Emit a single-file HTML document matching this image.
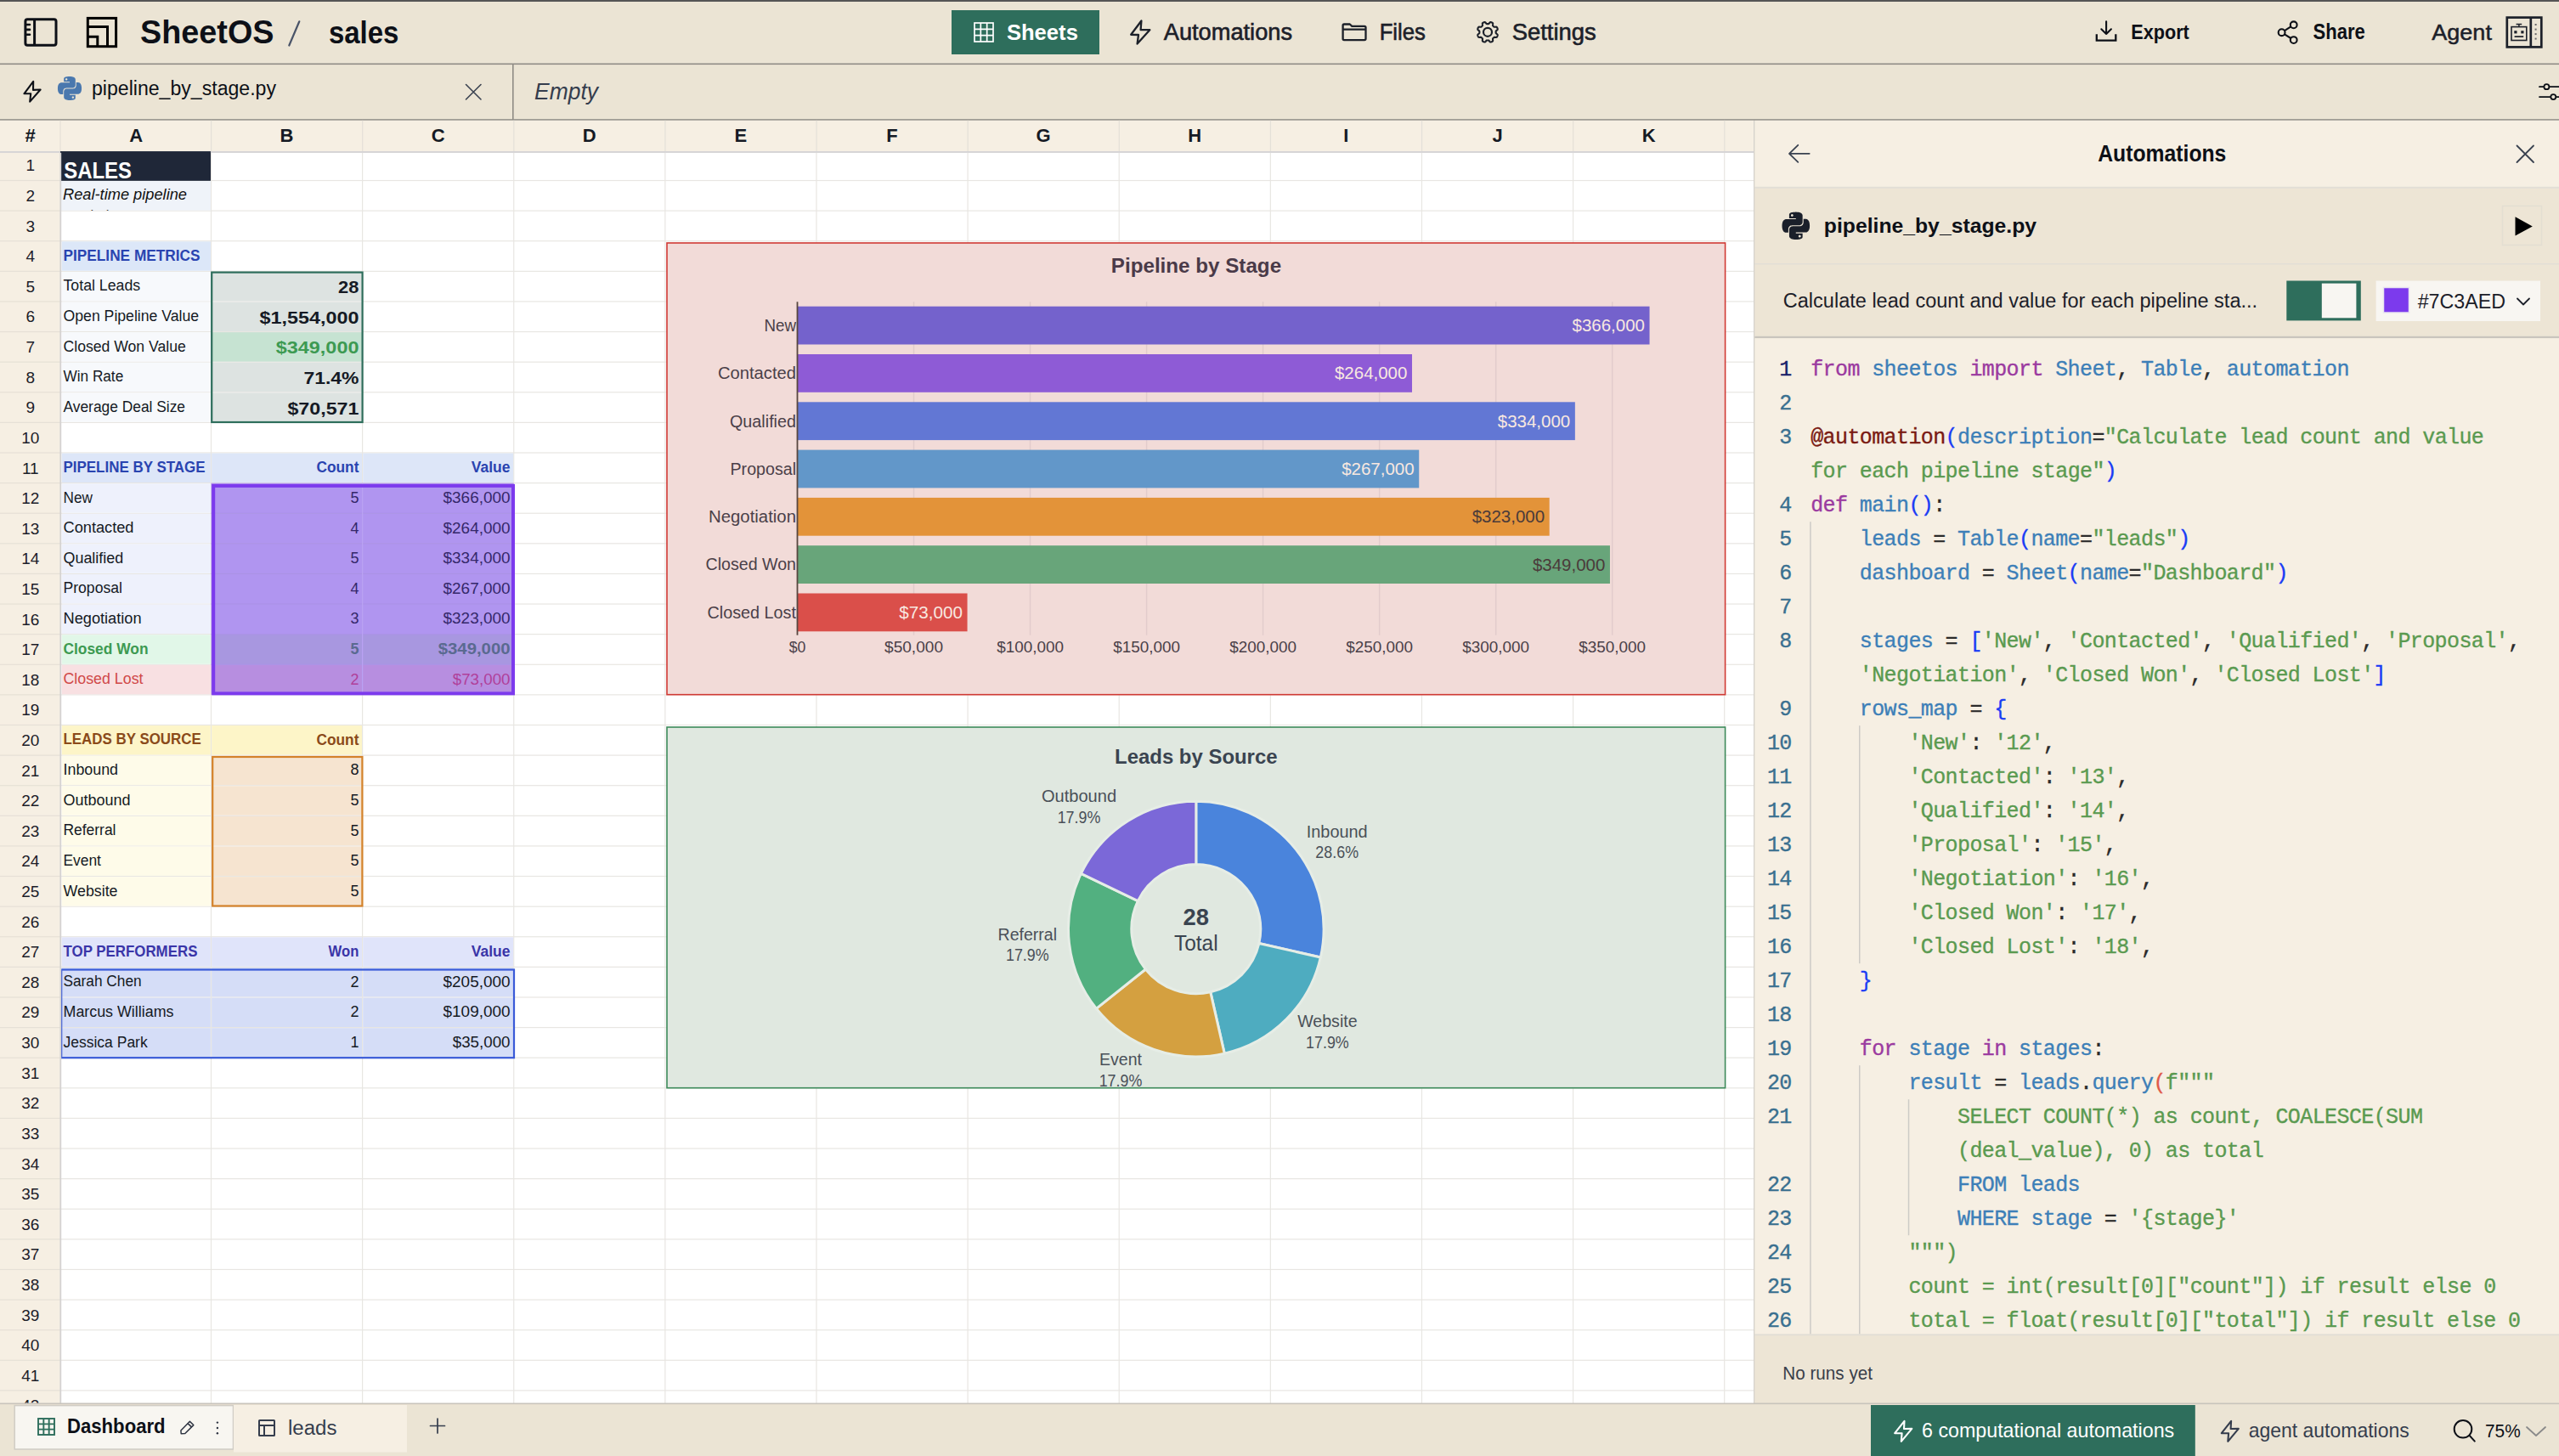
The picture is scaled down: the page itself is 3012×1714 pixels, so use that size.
<!DOCTYPE html>
<html><head><meta charset="utf-8"><title>SheetOS</title>
<style>html,body{margin:0;padding:0;width:3012px;height:1714px;overflow:hidden;background:#ebe4d4}
svg{display:block;font-family:"Liberation Sans",sans-serif}</style></head>
<body><svg width="3012" height="1714" viewBox="0 0 3012 1714">
<rect x="0.00" y="0.00" width="3012.00" height="1714.00" fill="#ebe4d4"/>
<rect x="0.00" y="0.00" width="3012.00" height="2.00" fill="#555555"/>
<rect x="0.00" y="74.50" width="3012.00" height="1.60" fill="#8f8c85"/>
<rect x="0.00" y="140.20" width="3012.00" height="1.60" fill="#8f8c85"/>
<rect x="603.00" y="75.00" width="1.60" height="66.00" fill="#8f8c85"/>
<rect x="29.9" y="22.7" width="36.1" height="30.5" rx="2.4" fill="none" stroke="#0d1017" stroke-width="3"/>
<path d="M40.6 22.7 V53.2" stroke="#0d1017" stroke-width="3" fill="none" stroke-linecap="butt" stroke-linejoin="round"/>
<path d="M31 29 H35 M31 34.9 H35 M31 40.7 H35" stroke="#0d1017" stroke-width="2.6" fill="none" stroke-linecap="round" stroke-linejoin="round"/>
<rect x="103.3" y="21.4" width="33.3" height="33.3" fill="none" stroke="#000" stroke-width="3"/>
<path d="M103.3 31.6 H126.5 V54.7 M103.3 43.3 H114.8 V54.7" fill="none" stroke="#000" stroke-width="3"/>
<text x="165.00" y="51.30" font-size="39" fill="#0d1017" font-weight="bold" textLength="157.50" lengthAdjust="spacingAndGlyphs">SheetOS</text>
<path d="M352.3 25.3 L340.3 53.5" stroke="#4a5468" stroke-width="2.2" fill="none" stroke-linecap="round" stroke-linejoin="round"/>
<text x="386.90" y="51.25" font-size="36" fill="#0d1017" font-weight="bold" textLength="82.50" lengthAdjust="spacingAndGlyphs">sales</text>
<rect x="1120.00" y="12.00" width="174.00" height="52.00" fill="#2e6e5c"/>
<g stroke="#fff" stroke-width="1.7" fill="none"><rect x="1147" y="27" width="22" height="22"/><path d="M1154.33 27 V49 M1161.67 27 V49 M1147 34.33 H1169 M1147 41.67 H1169"/></g>
<text x="1184.90" y="46.90" font-size="26.5" fill="#ffffff" font-weight="bold" textLength="84.00" lengthAdjust="spacingAndGlyphs">Sheets</text>
<path d="M1343.4 24.5 L1342.6 35 L1353.3 35.2 L1338.6 51.6 L1340 41 L1331.2 40.8 Z" stroke="#1c2029" stroke-width="2.3" fill="none" stroke-linecap="round" stroke-linejoin="round"/>
<text x="1369.80" y="47.00" font-size="27" fill="#1c2029" textLength="151.20" lengthAdjust="spacingAndGlyphs" stroke="#1c2029" stroke-width="0.6">Automations</text>
<path d="M1580.6 30 Q1580.6 28.5 1582 28.5 H1588.8 L1591.3 30.8 H1606 Q1607.5 30.8 1607.5 32.3 V45.6 Q1607.5 47.1 1606 47.1 H1582 Q1580.6 47.1 1580.6 45.6 Z M1580.6 34.6 H1607.5" stroke="#1c2029" stroke-width="2.3" fill="none" stroke-linecap="round" stroke-linejoin="round"/>
<text x="1623.70" y="46.60" font-size="26.8" fill="#1c2029" textLength="54.20" lengthAdjust="spacingAndGlyphs" stroke="#1c2029" stroke-width="0.6">Files</text>
<path d="M1751.00 28.15 L1751.32 28.15 L1751.63 28.14 L1751.95 28.11 L1752.29 27.99 L1752.68 27.65 L1753.15 27.01 L1753.66 26.39 L1754.13 26.11 L1754.56 26.06 L1754.96 26.13 L1755.35 26.25 L1755.73 26.39 L1756.09 26.56 L1756.45 26.75 L1756.78 26.98 L1757.05 27.31 L1757.18 27.85 L1757.11 28.65 L1756.99 29.44 L1757.02 29.95 L1757.18 30.28 L1757.38 30.52 L1757.60 30.75 L1757.82 30.98 L1758.05 31.20 L1758.28 31.42 L1758.52 31.62 L1758.85 31.78 L1759.36 31.81 L1760.15 31.69 L1760.95 31.62 L1761.49 31.75 L1761.82 32.02 L1762.05 32.35 L1762.24 32.71 L1762.41 33.07 L1762.55 33.45 L1762.67 33.84 L1762.74 34.24 L1762.69 34.67 L1762.41 35.14 L1761.79 35.65 L1761.15 36.12 L1760.81 36.51 L1760.69 36.85 L1760.66 37.17 L1760.65 37.48 L1760.65 37.80 L1760.65 38.12 L1760.66 38.43 L1760.69 38.75 L1760.81 39.09 L1761.15 39.48 L1761.79 39.95 L1762.41 40.46 L1762.69 40.93 L1762.74 41.36 L1762.67 41.76 L1762.55 42.15 L1762.41 42.53 L1762.24 42.89 L1762.05 43.25 L1761.82 43.58 L1761.49 43.85 L1760.95 43.98 L1760.15 43.91 L1759.36 43.79 L1758.85 43.82 L1758.52 43.98 L1758.28 44.18 L1758.05 44.40 L1757.82 44.62 L1757.60 44.85 L1757.38 45.08 L1757.18 45.32 L1757.02 45.65 L1756.99 46.16 L1757.11 46.95 L1757.18 47.75 L1757.05 48.29 L1756.78 48.62 L1756.45 48.85 L1756.09 49.04 L1755.73 49.21 L1755.35 49.35 L1754.96 49.47 L1754.56 49.54 L1754.13 49.49 L1753.66 49.21 L1753.15 48.59 L1752.68 47.95 L1752.29 47.61 L1751.95 47.49 L1751.63 47.46 L1751.32 47.45 L1751.00 47.45 L1750.68 47.45 L1750.37 47.46 L1750.05 47.49 L1749.71 47.61 L1749.32 47.95 L1748.85 48.59 L1748.34 49.21 L1747.87 49.49 L1747.44 49.54 L1747.04 49.47 L1746.65 49.35 L1746.27 49.21 L1745.91 49.04 L1745.55 48.85 L1745.22 48.62 L1744.95 48.29 L1744.82 47.75 L1744.89 46.95 L1745.01 46.16 L1744.98 45.65 L1744.82 45.32 L1744.62 45.08 L1744.40 44.85 L1744.18 44.62 L1743.95 44.40 L1743.72 44.18 L1743.48 43.98 L1743.15 43.82 L1742.64 43.79 L1741.85 43.91 L1741.05 43.98 L1740.51 43.85 L1740.18 43.58 L1739.95 43.25 L1739.76 42.89 L1739.59 42.53 L1739.45 42.15 L1739.33 41.76 L1739.26 41.36 L1739.31 40.93 L1739.59 40.46 L1740.21 39.95 L1740.85 39.48 L1741.19 39.09 L1741.31 38.75 L1741.34 38.43 L1741.35 38.12 L1741.35 37.80 L1741.35 37.48 L1741.34 37.17 L1741.31 36.85 L1741.19 36.51 L1740.85 36.12 L1740.21 35.65 L1739.59 35.14 L1739.31 34.67 L1739.26 34.24 L1739.33 33.84 L1739.45 33.45 L1739.59 33.07 L1739.76 32.71 L1739.95 32.35 L1740.18 32.02 L1740.51 31.75 L1741.05 31.62 L1741.85 31.69 L1742.64 31.81 L1743.15 31.78 L1743.48 31.62 L1743.72 31.42 L1743.95 31.20 L1744.18 30.98 L1744.40 30.75 L1744.62 30.52 L1744.82 30.28 L1744.98 29.95 L1745.01 29.44 L1744.89 28.65 L1744.82 27.85 L1744.95 27.31 L1745.22 26.98 L1745.55 26.75 L1745.91 26.56 L1746.27 26.39 L1746.65 26.25 L1747.04 26.13 L1747.44 26.06 L1747.87 26.11 L1748.34 26.39 L1748.85 27.01 L1749.32 27.65 L1749.71 27.99 L1750.05 28.11 L1750.37 28.14 L1750.68 28.15 Z" stroke="#1c2029" stroke-width="2.1" fill="none" stroke-linecap="round" stroke-linejoin="round"/>
<circle cx="1751" cy="37.8" r="5" fill="none" stroke="#1c2029" stroke-width="2.2"/>
<text x="1779.70" y="47.00" font-size="27" fill="#1c2029" textLength="99.00" lengthAdjust="spacingAndGlyphs" stroke="#1c2029" stroke-width="0.6">Settings</text>
<path d="M2467.8 40.2 V47.6 H2490.3 V40.2" stroke="#0d1017" stroke-width="2.3" fill="none" stroke-linecap="butt" stroke-linejoin="miter"/>
<path d="M2479.1 25.3 V40 M2473.3 34.3 L2479.1 40 L2484.9 34.3" stroke="#0d1017" stroke-width="2.1" fill="none" stroke-linecap="round" stroke-linejoin="round"/>
<text x="2508.30" y="46.10" font-size="24.5" fill="#0d1017" font-weight="bold" textLength="68.50" lengthAdjust="spacingAndGlyphs">Export</text>
<g fill="none" stroke="#0d1017" stroke-width="2.1"><circle cx="2699.7" cy="29.3" r="3.9"/><circle cx="2685.6" cy="38.2" r="3.9"/><circle cx="2699.7" cy="47.1" r="3.9"/><path d="M2689 36.1 L2696.3 31.4 M2689 40.3 L2696.3 45"/></g>
<text x="2722.50" y="45.90" font-size="25" fill="#0d1017" font-weight="bold" textLength="61.20" lengthAdjust="spacingAndGlyphs">Share</text>
<text x="2862.30" y="46.70" font-size="26.5" fill="#1c2029" textLength="70.60" lengthAdjust="spacingAndGlyphs" stroke="#1c2029" stroke-width="0.5">Agent</text>
<g fill="none" stroke="#1c2029"><rect x="2950.8" y="20.6" width="40.5" height="34.8" stroke-width="2.7"/><path d="M2978.8 20.6 V55.4" stroke-width="2.7"/><rect x="2956" y="31.6" width="17.8" height="15.9" stroke-width="1.6"/><path d="M2964.9 28.6 V31.6 M2961.6 28.5 H2968.2" stroke-width="1.5"/><path d="M2959.6 43.1 H2970.2" stroke-width="1.7"/></g>
<rect x="2959.30" y="36.20" width="3.20" height="3.20" fill="#1c2029"/>
<rect x="2967.30" y="36.20" width="3.20" height="3.20" fill="#1c2029"/>
<rect x="2983.60" y="28.00" width="2.00" height="2.00" fill="#6a6a6a"/>
<rect x="2983.60" y="33.60" width="2.00" height="2.00" fill="#6a6a6a"/>
<rect x="2983.60" y="39.10" width="2.00" height="2.00" fill="#6a6a6a"/>
<rect x="2983.60" y="44.60" width="2.00" height="2.00" fill="#6a6a6a"/>
<path d="M39.2 95.8 L39 105.9 L47.6 105.5 L35.2 119.6 L36.2 110.3 L28.4 110.3 Z" stroke="#0d1017" stroke-width="2.1" fill="none" stroke-linecap="round" stroke-linejoin="round"/>
<path transform="translate(68,90) scale(1.1667)" d="M14.25.18l.9.2.73.26.59.3.45.32.34.34.25.34.16.33.1.3.04.26.02.2-.01.13V8.5l-.05.63-.13.55-.21.46-.26.38-.3.31-.33.25-.35.19-.35.14-.33.1-.3.07-.26.04-.21.02H8.77l-.69.05-.59.14-.5.22-.41.27-.33.32-.27.35-.2.36-.15.37-.1.35-.07.32-.04.27-.02.21v3.06H3.17l-.21-.03-.28-.07-.32-.12-.35-.18-.36-.26-.36-.36-.35-.46-.32-.59-.28-.73-.21-.88-.14-1.05-.05-1.23.06-1.22.16-1.04.24-.87.32-.71.36-.57.4-.44.42-.33.42-.24.4-.16.36-.1.32-.05.24-.01h.16l.06.01h8.16v-.83H6.18l-.01-2.75-.02-.37.05-.34.11-.31.17-.28.25-.26.31-.23.38-.2.44-.18.51-.15.58-.12.64-.1.71-.06.77-.04.84-.02 1.27.05zm-6.3 1.98l-.23.33-.08.41.08.41.23.34.33.22.41.09.41-.09.33-.22.23-.34.08-.41-.08-.41-.23-.33-.33-.22-.41-.09-.41.09zm13.09 3.95l.28.06.32.12.35.18.36.27.36.35.35.47.32.59.28.73.21.88.14 1.04.05 1.23-.06 1.23-.16 1.04-.24.86-.32.71-.36.57-.4.45-.42.33-.42.24-.4.16-.36.09-.32.05-.24.02-.16-.01h-8.22v.82h5.84l.01 2.76.02.36-.05.34-.11.31-.17.29-.25.25-.31.24-.38.2-.44.17-.51.15-.58.13-.64.09-.71.07-.77.04-.84.01-1.27-.04-1.07-.14-.9-.2-.73-.25-.59-.3-.45-.33-.34-.34-.25-.34-.16-.33-.1-.3-.04-.25-.02-.2.01-.13v-5.34l.05-.64.13-.54.21-.46.26-.38.3-.32.33-.24.35-.2.35-.14.33-.1.3-.06.26-.04.21-.02.13-.01h5.84l.69-.05.59-.14.5-.21.41-.28.33-.32.27-.35.2-.36.15-.36.1-.35.07-.32.04-.28.02-.21V6.07h2.09l.14.01zm-6.47 14.25l-.23.33-.08.41.08.41.23.33.33.23.41.08.41-.08.33-.23.23-.33.08-.41-.08-.41-.23-.33-.33-.23-.41-.08-.41.08z" fill="#4a78ae"/>
<text x="108.00" y="111.70" font-size="23.3" fill="#0d1017" textLength="217.00" lengthAdjust="spacingAndGlyphs">pipeline_by_stage.py</text>
<path d="M548.5 99.5 L566 117 M566 99.5 L548.5 117" stroke="#3a4250" stroke-width="1.6" fill="none" stroke-linecap="round" stroke-linejoin="round"/>
<text x="629.00" y="117.00" font-size="27.5" fill="#353d4d" font-style="italic" textLength="75.00" lengthAdjust="spacingAndGlyphs">Empty</text>
<path d="M2989 102.2 H3012 M2989 114.1 H3012" stroke="#0d1017" stroke-width="1.8" fill="none" stroke-linecap="round" stroke-linejoin="round"/>
<circle cx="2997.4" cy="102.2" r="3" fill="#ebe4d4" stroke="#0d1017" stroke-width="1.8"/><circle cx="3005.3" cy="114.1" r="3" fill="#ebe4d4" stroke="#0d1017" stroke-width="1.8"/>
<rect x="0.00" y="141.80" width="2064.00" height="36.30" fill="#f6efe3"/>
<rect x="0.00" y="179.80" width="71.00" height="1472.20" fill="#f6efe3"/>
<rect x="72.00" y="179.80" width="1992.00" height="1472.20" fill="#ffffff"/>
<rect x="248.00" y="141.80" width="1.20" height="36.30" fill="#e4e0d8"/>
<rect x="426.12" y="141.80" width="1.20" height="36.30" fill="#e4e0d8"/>
<rect x="604.24" y="141.80" width="1.20" height="36.30" fill="#e4e0d8"/>
<rect x="782.36" y="141.80" width="1.20" height="36.30" fill="#e4e0d8"/>
<rect x="960.48" y="141.80" width="1.20" height="36.30" fill="#e4e0d8"/>
<rect x="1138.60" y="141.80" width="1.20" height="36.30" fill="#e4e0d8"/>
<rect x="1316.72" y="141.80" width="1.20" height="36.30" fill="#e4e0d8"/>
<rect x="1494.84" y="141.80" width="1.20" height="36.30" fill="#e4e0d8"/>
<rect x="1672.96" y="141.80" width="1.20" height="36.30" fill="#e4e0d8"/>
<rect x="1851.08" y="141.80" width="1.20" height="36.30" fill="#e4e0d8"/>
<rect x="2029.20" y="141.80" width="1.20" height="36.30" fill="#e4e0d8"/>
<rect x="70.40" y="141.80" width="1.20" height="36.30" fill="#e4e0d8"/>
<text x="35.50" y="167.20" font-size="22" fill="#151a24" font-weight="bold" text-anchor="middle">#</text>
<text x="160.20" y="167.20" font-size="22" fill="#151a24" font-weight="bold" text-anchor="middle">A</text>
<text x="337.56" y="167.20" font-size="22" fill="#151a24" font-weight="bold" text-anchor="middle">B</text>
<text x="515.68" y="167.20" font-size="22" fill="#151a24" font-weight="bold" text-anchor="middle">C</text>
<text x="693.80" y="167.20" font-size="22" fill="#151a24" font-weight="bold" text-anchor="middle">D</text>
<text x="871.92" y="167.20" font-size="22" fill="#151a24" font-weight="bold" text-anchor="middle">E</text>
<text x="1050.04" y="167.20" font-size="22" fill="#151a24" font-weight="bold" text-anchor="middle">F</text>
<text x="1228.16" y="167.20" font-size="22" fill="#151a24" font-weight="bold" text-anchor="middle">G</text>
<text x="1406.28" y="167.20" font-size="22" fill="#151a24" font-weight="bold" text-anchor="middle">H</text>
<text x="1584.40" y="167.20" font-size="22" fill="#151a24" font-weight="bold" text-anchor="middle">I</text>
<text x="1762.52" y="167.20" font-size="22" fill="#151a24" font-weight="bold" text-anchor="middle">J</text>
<text x="1940.64" y="167.20" font-size="22" fill="#151a24" font-weight="bold" text-anchor="middle">K</text>
<text x="35.80" y="201.40" font-size="19" fill="#1c2029" text-anchor="middle">1</text>
<rect x="0.00" y="211.91" width="71.00" height="1.20" fill="#e6e0d6"/>
<text x="35.80" y="237.01" font-size="19" fill="#1c2029" text-anchor="middle">2</text>
<rect x="0.00" y="247.52" width="71.00" height="1.20" fill="#e6e0d6"/>
<text x="35.80" y="272.62" font-size="19" fill="#1c2029" text-anchor="middle">3</text>
<rect x="0.00" y="283.13" width="71.00" height="1.20" fill="#e6e0d6"/>
<text x="35.80" y="308.23" font-size="19" fill="#1c2029" text-anchor="middle">4</text>
<rect x="0.00" y="318.74" width="71.00" height="1.20" fill="#e6e0d6"/>
<text x="35.80" y="343.84" font-size="19" fill="#1c2029" text-anchor="middle">5</text>
<rect x="0.00" y="354.35" width="71.00" height="1.20" fill="#e6e0d6"/>
<text x="35.80" y="379.45" font-size="19" fill="#1c2029" text-anchor="middle">6</text>
<rect x="0.00" y="389.96" width="71.00" height="1.20" fill="#e6e0d6"/>
<text x="35.80" y="415.06" font-size="19" fill="#1c2029" text-anchor="middle">7</text>
<rect x="0.00" y="425.57" width="71.00" height="1.20" fill="#e6e0d6"/>
<text x="35.80" y="450.67" font-size="19" fill="#1c2029" text-anchor="middle">8</text>
<rect x="0.00" y="461.18" width="71.00" height="1.20" fill="#e6e0d6"/>
<text x="35.80" y="486.28" font-size="19" fill="#1c2029" text-anchor="middle">9</text>
<rect x="0.00" y="496.79" width="71.00" height="1.20" fill="#e6e0d6"/>
<text x="35.80" y="521.89" font-size="19" fill="#1c2029" text-anchor="middle">10</text>
<rect x="0.00" y="532.40" width="71.00" height="1.20" fill="#e6e0d6"/>
<text x="35.80" y="557.50" font-size="19" fill="#1c2029" text-anchor="middle">11</text>
<rect x="0.00" y="568.01" width="71.00" height="1.20" fill="#e6e0d6"/>
<text x="35.80" y="593.11" font-size="19" fill="#1c2029" text-anchor="middle">12</text>
<rect x="0.00" y="603.62" width="71.00" height="1.20" fill="#e6e0d6"/>
<text x="35.80" y="628.72" font-size="19" fill="#1c2029" text-anchor="middle">13</text>
<rect x="0.00" y="639.23" width="71.00" height="1.20" fill="#e6e0d6"/>
<text x="35.80" y="664.33" font-size="19" fill="#1c2029" text-anchor="middle">14</text>
<rect x="0.00" y="674.84" width="71.00" height="1.20" fill="#e6e0d6"/>
<text x="35.80" y="699.94" font-size="19" fill="#1c2029" text-anchor="middle">15</text>
<rect x="0.00" y="710.45" width="71.00" height="1.20" fill="#e6e0d6"/>
<text x="35.80" y="735.55" font-size="19" fill="#1c2029" text-anchor="middle">16</text>
<rect x="0.00" y="746.06" width="71.00" height="1.20" fill="#e6e0d6"/>
<text x="35.80" y="771.16" font-size="19" fill="#1c2029" text-anchor="middle">17</text>
<rect x="0.00" y="781.67" width="71.00" height="1.20" fill="#e6e0d6"/>
<text x="35.80" y="806.77" font-size="19" fill="#1c2029" text-anchor="middle">18</text>
<rect x="0.00" y="817.28" width="71.00" height="1.20" fill="#e6e0d6"/>
<text x="35.80" y="842.38" font-size="19" fill="#1c2029" text-anchor="middle">19</text>
<rect x="0.00" y="852.89" width="71.00" height="1.20" fill="#e6e0d6"/>
<text x="35.80" y="877.99" font-size="19" fill="#1c2029" text-anchor="middle">20</text>
<rect x="0.00" y="888.50" width="71.00" height="1.20" fill="#e6e0d6"/>
<text x="35.80" y="913.60" font-size="19" fill="#1c2029" text-anchor="middle">21</text>
<rect x="0.00" y="924.11" width="71.00" height="1.20" fill="#e6e0d6"/>
<text x="35.80" y="949.21" font-size="19" fill="#1c2029" text-anchor="middle">22</text>
<rect x="0.00" y="959.72" width="71.00" height="1.20" fill="#e6e0d6"/>
<text x="35.80" y="984.82" font-size="19" fill="#1c2029" text-anchor="middle">23</text>
<rect x="0.00" y="995.33" width="71.00" height="1.20" fill="#e6e0d6"/>
<text x="35.80" y="1020.43" font-size="19" fill="#1c2029" text-anchor="middle">24</text>
<rect x="0.00" y="1030.94" width="71.00" height="1.20" fill="#e6e0d6"/>
<text x="35.80" y="1056.04" font-size="19" fill="#1c2029" text-anchor="middle">25</text>
<rect x="0.00" y="1066.55" width="71.00" height="1.20" fill="#e6e0d6"/>
<text x="35.80" y="1091.65" font-size="19" fill="#1c2029" text-anchor="middle">26</text>
<rect x="0.00" y="1102.16" width="71.00" height="1.20" fill="#e6e0d6"/>
<text x="35.80" y="1127.26" font-size="19" fill="#1c2029" text-anchor="middle">27</text>
<rect x="0.00" y="1137.77" width="71.00" height="1.20" fill="#e6e0d6"/>
<text x="35.80" y="1162.87" font-size="19" fill="#1c2029" text-anchor="middle">28</text>
<rect x="0.00" y="1173.38" width="71.00" height="1.20" fill="#e6e0d6"/>
<text x="35.80" y="1198.48" font-size="19" fill="#1c2029" text-anchor="middle">29</text>
<rect x="0.00" y="1208.99" width="71.00" height="1.20" fill="#e6e0d6"/>
<text x="35.80" y="1234.09" font-size="19" fill="#1c2029" text-anchor="middle">30</text>
<rect x="0.00" y="1244.60" width="71.00" height="1.20" fill="#e6e0d6"/>
<text x="35.80" y="1269.70" font-size="19" fill="#1c2029" text-anchor="middle">31</text>
<rect x="0.00" y="1280.21" width="71.00" height="1.20" fill="#e6e0d6"/>
<text x="35.80" y="1305.31" font-size="19" fill="#1c2029" text-anchor="middle">32</text>
<rect x="0.00" y="1315.82" width="71.00" height="1.20" fill="#e6e0d6"/>
<text x="35.80" y="1340.92" font-size="19" fill="#1c2029" text-anchor="middle">33</text>
<rect x="0.00" y="1351.43" width="71.00" height="1.20" fill="#e6e0d6"/>
<text x="35.80" y="1376.53" font-size="19" fill="#1c2029" text-anchor="middle">34</text>
<rect x="0.00" y="1387.04" width="71.00" height="1.20" fill="#e6e0d6"/>
<text x="35.80" y="1412.14" font-size="19" fill="#1c2029" text-anchor="middle">35</text>
<rect x="0.00" y="1422.65" width="71.00" height="1.20" fill="#e6e0d6"/>
<text x="35.80" y="1447.75" font-size="19" fill="#1c2029" text-anchor="middle">36</text>
<rect x="0.00" y="1458.26" width="71.00" height="1.20" fill="#e6e0d6"/>
<text x="35.80" y="1483.36" font-size="19" fill="#1c2029" text-anchor="middle">37</text>
<rect x="0.00" y="1493.87" width="71.00" height="1.20" fill="#e6e0d6"/>
<text x="35.80" y="1518.97" font-size="19" fill="#1c2029" text-anchor="middle">38</text>
<rect x="0.00" y="1529.48" width="71.00" height="1.20" fill="#e6e0d6"/>
<text x="35.80" y="1554.58" font-size="19" fill="#1c2029" text-anchor="middle">39</text>
<rect x="0.00" y="1565.09" width="71.00" height="1.20" fill="#e6e0d6"/>
<text x="35.80" y="1590.19" font-size="19" fill="#1c2029" text-anchor="middle">40</text>
<rect x="0.00" y="1600.70" width="71.00" height="1.20" fill="#e6e0d6"/>
<text x="35.80" y="1625.80" font-size="19" fill="#1c2029" text-anchor="middle">41</text>
<rect x="0.00" y="1636.31" width="71.00" height="1.20" fill="#e6e0d6"/>
<text x="35.80" y="1661.41" font-size="19" fill="#1c2029" text-anchor="middle">42</text>
<rect x="72.00" y="211.91" width="1992.00" height="1.20" fill="#e8e6e2"/>
<rect x="72.00" y="247.52" width="1992.00" height="1.20" fill="#e8e6e2"/>
<rect x="72.00" y="283.13" width="1992.00" height="1.20" fill="#e8e6e2"/>
<rect x="72.00" y="318.74" width="1992.00" height="1.20" fill="#e8e6e2"/>
<rect x="72.00" y="354.35" width="1992.00" height="1.20" fill="#e8e6e2"/>
<rect x="72.00" y="389.96" width="1992.00" height="1.20" fill="#e8e6e2"/>
<rect x="72.00" y="425.57" width="1992.00" height="1.20" fill="#e8e6e2"/>
<rect x="72.00" y="461.18" width="1992.00" height="1.20" fill="#e8e6e2"/>
<rect x="72.00" y="496.79" width="1992.00" height="1.20" fill="#e8e6e2"/>
<rect x="72.00" y="532.40" width="1992.00" height="1.20" fill="#e8e6e2"/>
<rect x="72.00" y="568.01" width="1992.00" height="1.20" fill="#e8e6e2"/>
<rect x="72.00" y="603.62" width="1992.00" height="1.20" fill="#e8e6e2"/>
<rect x="72.00" y="639.23" width="1992.00" height="1.20" fill="#e8e6e2"/>
<rect x="72.00" y="674.84" width="1992.00" height="1.20" fill="#e8e6e2"/>
<rect x="72.00" y="710.45" width="1992.00" height="1.20" fill="#e8e6e2"/>
<rect x="72.00" y="746.06" width="1992.00" height="1.20" fill="#e8e6e2"/>
<rect x="72.00" y="781.67" width="1992.00" height="1.20" fill="#e8e6e2"/>
<rect x="72.00" y="817.28" width="1992.00" height="1.20" fill="#e8e6e2"/>
<rect x="72.00" y="852.89" width="1992.00" height="1.20" fill="#e8e6e2"/>
<rect x="72.00" y="888.50" width="1992.00" height="1.20" fill="#e8e6e2"/>
<rect x="72.00" y="924.11" width="1992.00" height="1.20" fill="#e8e6e2"/>
<rect x="72.00" y="959.72" width="1992.00" height="1.20" fill="#e8e6e2"/>
<rect x="72.00" y="995.33" width="1992.00" height="1.20" fill="#e8e6e2"/>
<rect x="72.00" y="1030.94" width="1992.00" height="1.20" fill="#e8e6e2"/>
<rect x="72.00" y="1066.55" width="1992.00" height="1.20" fill="#e8e6e2"/>
<rect x="72.00" y="1102.16" width="1992.00" height="1.20" fill="#e8e6e2"/>
<rect x="72.00" y="1137.77" width="1992.00" height="1.20" fill="#e8e6e2"/>
<rect x="72.00" y="1173.38" width="1992.00" height="1.20" fill="#e8e6e2"/>
<rect x="72.00" y="1208.99" width="1992.00" height="1.20" fill="#e8e6e2"/>
<rect x="72.00" y="1244.60" width="1992.00" height="1.20" fill="#e8e6e2"/>
<rect x="72.00" y="1280.21" width="1992.00" height="1.20" fill="#e8e6e2"/>
<rect x="72.00" y="1315.82" width="1992.00" height="1.20" fill="#e8e6e2"/>
<rect x="72.00" y="1351.43" width="1992.00" height="1.20" fill="#e8e6e2"/>
<rect x="72.00" y="1387.04" width="1992.00" height="1.20" fill="#e8e6e2"/>
<rect x="72.00" y="1422.65" width="1992.00" height="1.20" fill="#e8e6e2"/>
<rect x="72.00" y="1458.26" width="1992.00" height="1.20" fill="#e8e6e2"/>
<rect x="72.00" y="1493.87" width="1992.00" height="1.20" fill="#e8e6e2"/>
<rect x="72.00" y="1529.48" width="1992.00" height="1.20" fill="#e8e6e2"/>
<rect x="72.00" y="1565.09" width="1992.00" height="1.20" fill="#e8e6e2"/>
<rect x="72.00" y="1600.70" width="1992.00" height="1.20" fill="#e8e6e2"/>
<rect x="72.00" y="1636.31" width="1992.00" height="1.20" fill="#e8e6e2"/>
<rect x="247.90" y="179.80" width="1.20" height="1472.20" fill="#e8e6e2"/>
<rect x="426.02" y="179.80" width="1.20" height="1472.20" fill="#e8e6e2"/>
<rect x="604.14" y="179.80" width="1.20" height="1472.20" fill="#e8e6e2"/>
<rect x="782.26" y="179.80" width="1.20" height="1472.20" fill="#e8e6e2"/>
<rect x="960.38" y="179.80" width="1.20" height="1472.20" fill="#e8e6e2"/>
<rect x="1138.50" y="179.80" width="1.20" height="1472.20" fill="#e8e6e2"/>
<rect x="1316.62" y="179.80" width="1.20" height="1472.20" fill="#e8e6e2"/>
<rect x="1494.74" y="179.80" width="1.20" height="1472.20" fill="#e8e6e2"/>
<rect x="1672.86" y="179.80" width="1.20" height="1472.20" fill="#e8e6e2"/>
<rect x="1850.98" y="179.80" width="1.20" height="1472.20" fill="#e8e6e2"/>
<rect x="2029.10" y="179.80" width="1.20" height="1472.20" fill="#e8e6e2"/>
<rect x="71.10" y="178.10" width="176.80" height="34.50" fill="#1f2738"/>
<text x="75.20" y="209.50" font-size="28" fill="#ffffff" font-weight="bold" textLength="79.80" lengthAdjust="spacingAndGlyphs">SALES</text>
<rect x="72.00" y="213.10" width="176.00" height="34.50" fill="#eff3f9"/>
<text x="74.00" y="235.00" font-size="18.4" fill="#111111" font-style="italic" textLength="146.00" lengthAdjust="spacingAndGlyphs">Real-time pipeline</text>
<clipPath id="c2"><rect x="72" y="213" width="176" height="34.8"/></clipPath>
<text x="74.00" y="260.00" font-size="18.4" fill="#111111" font-style="italic" clip-path="url(#c2)">analytics</text>
<rect x="72.60" y="284.33" width="175.30" height="34.41" fill="#dce7f8"/>
<text x="74.50" y="306.73" font-size="18" fill="#2a44b0" font-weight="bold" textLength="161.00" lengthAdjust="spacingAndGlyphs">PIPELINE METRICS</text>
<rect x="72.60" y="319.94" width="175.30" height="34.41" fill="#f7f9fc"/>
<rect x="72.60" y="355.55" width="175.30" height="34.41" fill="#f7f9fc"/>
<rect x="72.60" y="391.16" width="175.30" height="34.41" fill="#f7f9fc"/>
<rect x="72.60" y="426.77" width="175.30" height="34.41" fill="#f7f9fc"/>
<rect x="72.60" y="462.38" width="175.30" height="34.41" fill="#f7f9fc"/>
<rect x="249.10" y="319.94" width="176.92" height="34.41" fill="#dde3e1"/>
<rect x="249.10" y="355.55" width="176.92" height="34.41" fill="#dde3e1"/>
<rect x="249.10" y="391.16" width="176.92" height="34.41" fill="#dde3e1"/>
<rect x="249.10" y="426.77" width="176.92" height="34.41" fill="#dde3e1"/>
<rect x="249.10" y="462.38" width="176.92" height="34.41" fill="#dde3e1"/>
<rect x="249.10" y="391.16" width="176.92" height="34.41" fill="#c6e3d2"/>
<text x="74.50" y="342.34" font-size="18" fill="#151a24" textLength="90.60" lengthAdjust="spacingAndGlyphs">Total Leads</text>
<text x="74.50" y="377.95" font-size="18" fill="#151a24" textLength="159.70" lengthAdjust="spacingAndGlyphs">Open Pipeline Value</text>
<text x="74.50" y="413.56" font-size="18" fill="#151a24" textLength="144.30" lengthAdjust="spacingAndGlyphs">Closed Won Value</text>
<text x="74.50" y="449.17" font-size="18" fill="#151a24" textLength="70.70" lengthAdjust="spacingAndGlyphs">Win Rate</text>
<text x="74.50" y="484.78" font-size="18" fill="#151a24" textLength="143.50" lengthAdjust="spacingAndGlyphs">Average Deal Size</text>
<text x="422.42" y="345.14" font-size="20.3" fill="#151a24" font-weight="bold" text-anchor="end" textLength="24.30" lengthAdjust="spacingAndGlyphs">28</text>
<text x="422.42" y="380.75" font-size="20.3" fill="#151a24" font-weight="bold" text-anchor="end" textLength="116.90" lengthAdjust="spacingAndGlyphs">$1,554,000</text>
<text x="422.42" y="416.36" font-size="20.3" fill="#3d9a52" font-weight="bold" text-anchor="end" textLength="97.60" lengthAdjust="spacingAndGlyphs">$349,000</text>
<text x="422.42" y="451.97" font-size="20.3" fill="#151a24" font-weight="bold" text-anchor="end" textLength="65.00" lengthAdjust="spacingAndGlyphs">71.4%</text>
<text x="422.42" y="487.58" font-size="20.3" fill="#151a24" font-weight="bold" text-anchor="end" textLength="84.00" lengthAdjust="spacingAndGlyphs">$70,571</text>
<rect x="249.2" y="320.6" width="177.4" height="176.4" fill="none" stroke="#2e6e5c" stroke-width="2.2"/>
<rect x="72.60" y="533.60" width="175.30" height="34.41" fill="#dde6f8"/>
<rect x="249.10" y="533.60" width="176.92" height="34.41" fill="#dde6f8"/>
<rect x="427.22" y="533.60" width="176.92" height="34.41" fill="#dde6f8"/>
<text x="74.50" y="556.00" font-size="18" fill="#2a44b0" font-weight="bold" textLength="167.00" lengthAdjust="spacingAndGlyphs">PIPELINE BY STAGE</text>
<text x="422.42" y="556.30" font-size="18" fill="#2a44b0" font-weight="bold" text-anchor="end" textLength="50.00" lengthAdjust="spacingAndGlyphs">Count</text>
<text x="600.54" y="556.30" font-size="18" fill="#2a44b0" font-weight="bold" text-anchor="end" textLength="45.70" lengthAdjust="spacingAndGlyphs">Value</text>
<rect x="72.60" y="569.21" width="175.30" height="34.41" fill="#eef1fc"/>
<rect x="72.60" y="604.82" width="175.30" height="34.41" fill="#eef1fc"/>
<rect x="72.60" y="640.43" width="175.30" height="34.41" fill="#eef1fc"/>
<rect x="72.60" y="676.04" width="175.30" height="34.41" fill="#eef1fc"/>
<rect x="72.60" y="711.65" width="175.30" height="34.41" fill="#eef1fc"/>
<rect x="72.60" y="747.26" width="175.30" height="34.41" fill="#e1f7e8"/>
<rect x="72.60" y="782.87" width="175.30" height="34.41" fill="#f8e0e2"/>
<rect x="248.50" y="568.61" width="356.24" height="35.61" fill="#b095f0"/>
<rect x="248.50" y="604.22" width="356.24" height="35.61" fill="#b095f0"/>
<rect x="248.50" y="639.83" width="356.24" height="35.61" fill="#b095f0"/>
<rect x="248.50" y="675.44" width="356.24" height="35.61" fill="#b095f0"/>
<rect x="248.50" y="711.05" width="356.24" height="35.61" fill="#b095f0"/>
<rect x="248.50" y="746.66" width="356.24" height="35.61" fill="#a897e0"/>
<rect x="248.50" y="782.27" width="356.24" height="35.61" fill="#b78ee0"/>
<rect x="248.50" y="603.62" width="356.24" height="1.20" fill="#ab92e6"/>
<rect x="248.50" y="639.23" width="356.24" height="1.20" fill="#ab92e6"/>
<rect x="248.50" y="674.84" width="356.24" height="1.20" fill="#ab92e6"/>
<rect x="248.50" y="710.45" width="356.24" height="1.20" fill="#ab92e6"/>
<rect x="248.50" y="746.06" width="356.24" height="1.20" fill="#ab92e6"/>
<rect x="248.50" y="781.67" width="356.24" height="1.20" fill="#ab92e6"/>
<rect x="426.02" y="568.61" width="1.20" height="249.27" fill="#b9a3f2"/>
<text x="74.50" y="591.61" font-size="18" fill="#151a24" textLength="34.40" lengthAdjust="spacingAndGlyphs">New</text>
<text x="74.50" y="627.22" font-size="18" fill="#151a24" textLength="83.00" lengthAdjust="spacingAndGlyphs">Contacted</text>
<text x="74.50" y="662.83" font-size="18" fill="#151a24" textLength="70.70" lengthAdjust="spacingAndGlyphs">Qualified</text>
<text x="74.50" y="698.44" font-size="18" fill="#151a24" textLength="69.40" lengthAdjust="spacingAndGlyphs">Proposal</text>
<text x="74.50" y="734.05" font-size="18" fill="#151a24" textLength="92.10" lengthAdjust="spacingAndGlyphs">Negotiation</text>
<text x="74.50" y="769.66" font-size="18" fill="#3d9a52" font-weight="bold" textLength="100.00" lengthAdjust="spacingAndGlyphs">Closed Won</text>
<text x="74.50" y="805.27" font-size="18" fill="#d04848" textLength="94.00" lengthAdjust="spacingAndGlyphs">Closed Lost</text>
<text x="422.42" y="591.91" font-size="18" fill="#35286a" text-anchor="end">5</text>
<text x="422.42" y="627.52" font-size="18" fill="#35286a" text-anchor="end">4</text>
<text x="422.42" y="663.13" font-size="18" fill="#35286a" text-anchor="end">5</text>
<text x="422.42" y="698.74" font-size="18" fill="#35286a" text-anchor="end">4</text>
<text x="422.42" y="734.35" font-size="18" fill="#35286a" text-anchor="end">3</text>
<text x="600.54" y="591.91" font-size="18" fill="#35286a" text-anchor="end" textLength="79.00" lengthAdjust="spacingAndGlyphs">$366,000</text>
<text x="600.54" y="627.52" font-size="18" fill="#35286a" text-anchor="end" textLength="79.00" lengthAdjust="spacingAndGlyphs">$264,000</text>
<text x="600.54" y="663.13" font-size="18" fill="#35286a" text-anchor="end" textLength="79.00" lengthAdjust="spacingAndGlyphs">$334,000</text>
<text x="600.54" y="698.74" font-size="18" fill="#35286a" text-anchor="end" textLength="79.00" lengthAdjust="spacingAndGlyphs">$267,000</text>
<text x="600.54" y="734.35" font-size="18" fill="#35286a" text-anchor="end" textLength="79.00" lengthAdjust="spacingAndGlyphs">$323,000</text>
<text x="422.42" y="769.96" font-size="18" fill="#5a6a90" font-weight="bold" text-anchor="end">5</text>
<text x="600.54" y="769.96" font-size="18" fill="#5a6a90" font-weight="bold" text-anchor="end" textLength="84.80" lengthAdjust="spacingAndGlyphs">$349,000</text>
<text x="422.42" y="805.57" font-size="18" fill="#b0409a" text-anchor="end">2</text>
<text x="600.54" y="805.57" font-size="18" fill="#b0409a" text-anchor="end" textLength="67.80" lengthAdjust="spacingAndGlyphs">$73,000</text>
<rect x="251.2" y="571.9" width="352.8" height="244.5" fill="none" stroke="#7c3aed" stroke-width="4"/>
<rect x="72.60" y="854.09" width="175.30" height="34.41" fill="#fdf5c8"/>
<rect x="249.10" y="854.09" width="176.92" height="34.41" fill="#fdf5c8"/>
<text x="74.50" y="876.49" font-size="18" fill="#8a4a1a" font-weight="bold" textLength="162.30" lengthAdjust="spacingAndGlyphs">LEADS BY SOURCE</text>
<text x="422.42" y="876.79" font-size="18" fill="#8a4a1a" font-weight="bold" text-anchor="end" textLength="50.00" lengthAdjust="spacingAndGlyphs">Count</text>
<rect x="72.60" y="889.70" width="175.30" height="34.41" fill="#fefbe9"/>
<rect x="249.10" y="889.70" width="176.92" height="34.41" fill="#f6e4d0"/>
<text x="74.50" y="912.10" font-size="18" fill="#151a24" textLength="64.50" lengthAdjust="spacingAndGlyphs">Inbound</text>
<text x="422.42" y="912.40" font-size="18" fill="#151a24" text-anchor="end">8</text>
<rect x="72.60" y="925.31" width="175.30" height="34.41" fill="#fefbe9"/>
<rect x="249.10" y="925.31" width="176.92" height="34.41" fill="#f6e4d0"/>
<text x="74.50" y="947.71" font-size="18" fill="#151a24" textLength="79.00" lengthAdjust="spacingAndGlyphs">Outbound</text>
<text x="422.42" y="948.01" font-size="18" fill="#151a24" text-anchor="end">5</text>
<rect x="72.60" y="960.92" width="175.30" height="34.41" fill="#fefbe9"/>
<rect x="249.10" y="960.92" width="176.92" height="34.41" fill="#f6e4d0"/>
<text x="74.50" y="983.32" font-size="18" fill="#151a24" textLength="62.00" lengthAdjust="spacingAndGlyphs">Referral</text>
<text x="422.42" y="983.62" font-size="18" fill="#151a24" text-anchor="end">5</text>
<rect x="72.60" y="996.53" width="175.30" height="34.41" fill="#fefbe9"/>
<rect x="249.10" y="996.53" width="176.92" height="34.41" fill="#f6e4d0"/>
<text x="74.50" y="1018.93" font-size="18" fill="#151a24" textLength="44.40" lengthAdjust="spacingAndGlyphs">Event</text>
<text x="422.42" y="1019.23" font-size="18" fill="#151a24" text-anchor="end">5</text>
<rect x="72.60" y="1032.14" width="175.30" height="34.41" fill="#fefbe9"/>
<rect x="249.10" y="1032.14" width="176.92" height="34.41" fill="#f6e4d0"/>
<text x="74.50" y="1054.54" font-size="18" fill="#151a24" textLength="64.00" lengthAdjust="spacingAndGlyphs">Website</text>
<text x="422.42" y="1054.84" font-size="18" fill="#151a24" text-anchor="end">5</text>
<rect x="250.2" y="891" width="176.2" height="175.5" fill="none" stroke="#d4822a" stroke-width="2.2"/>
<rect x="72.60" y="1103.36" width="175.30" height="34.41" fill="#e0e4fa"/>
<rect x="249.10" y="1103.36" width="176.92" height="34.41" fill="#e0e4fa"/>
<rect x="427.22" y="1103.36" width="176.92" height="34.41" fill="#e0e4fa"/>
<text x="74.50" y="1125.76" font-size="18" fill="#3a35a8" font-weight="bold" textLength="157.90" lengthAdjust="spacingAndGlyphs">TOP PERFORMERS</text>
<text x="422.42" y="1126.06" font-size="18" fill="#3a35a8" font-weight="bold" text-anchor="end" textLength="35.80" lengthAdjust="spacingAndGlyphs">Won</text>
<text x="600.54" y="1126.06" font-size="18" fill="#3a35a8" font-weight="bold" text-anchor="end" textLength="45.70" lengthAdjust="spacingAndGlyphs">Value</text>
<rect x="72.60" y="1138.97" width="175.30" height="34.41" fill="#d5ddf7"/>
<rect x="249.10" y="1138.97" width="176.92" height="34.41" fill="#d5ddf7"/>
<rect x="427.22" y="1138.97" width="176.92" height="34.41" fill="#d5ddf7"/>
<text x="74.50" y="1161.37" font-size="18" fill="#151a24" textLength="92.10" lengthAdjust="spacingAndGlyphs">Sarah Chen</text>
<text x="422.42" y="1161.67" font-size="18" fill="#151a24" text-anchor="end">2</text>
<text x="600.54" y="1161.67" font-size="18" fill="#151a24" text-anchor="end" textLength="79.00" lengthAdjust="spacingAndGlyphs">$205,000</text>
<rect x="72.60" y="1174.58" width="175.30" height="34.41" fill="#d5ddf7"/>
<rect x="249.10" y="1174.58" width="176.92" height="34.41" fill="#d5ddf7"/>
<rect x="427.22" y="1174.58" width="176.92" height="34.41" fill="#d5ddf7"/>
<text x="74.50" y="1196.98" font-size="18" fill="#151a24" textLength="130.00" lengthAdjust="spacingAndGlyphs">Marcus Williams</text>
<text x="422.42" y="1197.28" font-size="18" fill="#151a24" text-anchor="end">2</text>
<text x="600.54" y="1197.28" font-size="18" fill="#151a24" text-anchor="end" textLength="79.00" lengthAdjust="spacingAndGlyphs">$109,000</text>
<rect x="72.60" y="1210.19" width="175.30" height="34.41" fill="#d5ddf7"/>
<rect x="249.10" y="1210.19" width="176.92" height="34.41" fill="#d5ddf7"/>
<rect x="427.22" y="1210.19" width="176.92" height="34.41" fill="#d5ddf7"/>
<text x="74.50" y="1232.59" font-size="18" fill="#151a24" textLength="99.20" lengthAdjust="spacingAndGlyphs">Jessica Park</text>
<text x="422.42" y="1232.89" font-size="18" fill="#151a24" text-anchor="end">1</text>
<text x="600.54" y="1232.89" font-size="18" fill="#151a24" text-anchor="end" textLength="67.80" lengthAdjust="spacingAndGlyphs">$35,000</text>
<rect x="72.2" y="1141.5" width="532.8" height="103.7" fill="none" stroke="#3a5ad8" stroke-width="2.2"/>
<rect x="72.00" y="178.10" width="1992.00" height="1.70" fill="#d3d2d6"/>
<rect x="0.00" y="178.10" width="71.00" height="1.70" fill="#d3d2d6"/>
<rect x="71.10" y="178.10" width="176.80" height="34.50" fill="#1f2738"/>
<text x="75.20" y="209.50" font-size="28" fill="#ffffff" font-weight="bold" textLength="79.80" lengthAdjust="spacingAndGlyphs">SALES</text>
<rect x="70.40" y="179.80" width="1.80" height="1472.20" fill="#d4d2d2"/>
<rect x="785" y="286" width="1245.6" height="531.7" fill="#f2dbd8" stroke="#d03a35" stroke-width="1.6"/>
<text x="1307.80" y="320.50" font-size="23.8" fill="#4a3a48" font-weight="bold" textLength="200.30" lengthAdjust="spacingAndGlyphs">Pipeline by Stage</text>
<rect x="1074.78" y="355.30" width="1.50" height="392.40" fill="#e2cccc"/>
<rect x="1211.81" y="355.30" width="1.50" height="392.40" fill="#e2cccc"/>
<rect x="1348.84" y="355.30" width="1.50" height="392.40" fill="#e2cccc"/>
<rect x="1485.86" y="355.30" width="1.50" height="392.40" fill="#e2cccc"/>
<rect x="1622.89" y="355.30" width="1.50" height="392.40" fill="#e2cccc"/>
<rect x="1759.92" y="355.30" width="1.50" height="392.40" fill="#e2cccc"/>
<rect x="1896.95" y="355.30" width="1.50" height="392.40" fill="#e2cccc"/>
<rect x="938.50" y="360.70" width="1003.05" height="44.80" fill="#7462cc"/>
<text x="1935.95" y="390.10" font-size="20" fill="#f8e8e0" text-anchor="end" textLength="85.44" lengthAdjust="spacingAndGlyphs">$366,000</text>
<text x="937.00" y="389.90" font-size="19.3" fill="#4a4048" text-anchor="end" textLength="37.50" lengthAdjust="spacingAndGlyphs">New</text>
<rect x="938.50" y="417.00" width="723.51" height="44.80" fill="#8e5bd6"/>
<text x="1656.41" y="446.40" font-size="20" fill="#f8e8e0" text-anchor="end" textLength="85.44" lengthAdjust="spacingAndGlyphs">$264,000</text>
<text x="937.00" y="446.20" font-size="19.3" fill="#4a4048" text-anchor="end" textLength="92.00" lengthAdjust="spacingAndGlyphs">Contacted</text>
<rect x="938.50" y="473.30" width="915.35" height="44.80" fill="#6277d4"/>
<text x="1848.25" y="502.70" font-size="20" fill="#f8e8e0" text-anchor="end" textLength="85.44" lengthAdjust="spacingAndGlyphs">$334,000</text>
<text x="937.00" y="502.50" font-size="19.3" fill="#4a4048" text-anchor="end" textLength="78.00" lengthAdjust="spacingAndGlyphs">Qualified</text>
<rect x="938.50" y="529.60" width="731.73" height="44.80" fill="#6297c9"/>
<text x="1664.63" y="559.00" font-size="20" fill="#f8e8e0" text-anchor="end" textLength="85.44" lengthAdjust="spacingAndGlyphs">$267,000</text>
<text x="937.00" y="558.80" font-size="19.3" fill="#4a4048" text-anchor="end" textLength="77.50" lengthAdjust="spacingAndGlyphs">Proposal</text>
<rect x="938.50" y="585.90" width="885.20" height="44.80" fill="#e39339"/>
<text x="1818.10" y="615.30" font-size="20" fill="#4b3b3a" text-anchor="end" textLength="85.44" lengthAdjust="spacingAndGlyphs">$323,000</text>
<text x="937.00" y="615.10" font-size="19.3" fill="#4a4048" text-anchor="end" textLength="103.00" lengthAdjust="spacingAndGlyphs">Negotiation</text>
<rect x="938.50" y="642.20" width="956.46" height="44.80" fill="#68a57a"/>
<text x="1889.36" y="671.60" font-size="20" fill="#4b3b3a" text-anchor="end" textLength="85.44" lengthAdjust="spacingAndGlyphs">$349,000</text>
<text x="937.00" y="671.40" font-size="19.3" fill="#4a4048" text-anchor="end" textLength="106.50" lengthAdjust="spacingAndGlyphs">Closed Won</text>
<rect x="938.50" y="698.50" width="200.06" height="44.80" fill="#da4f4a"/>
<text x="1132.96" y="727.90" font-size="20" fill="#f8e8e0" text-anchor="end" textLength="74.76" lengthAdjust="spacingAndGlyphs">$73,000</text>
<text x="937.00" y="727.70" font-size="19.3" fill="#4a4048" text-anchor="end" textLength="104.50" lengthAdjust="spacingAndGlyphs">Closed Lost</text>
<rect x="937.60" y="355.30" width="1.80" height="392.40" fill="#58463f"/>
<text x="938.50" y="768.00" font-size="19" fill="#4a4048" text-anchor="middle" textLength="19.70" lengthAdjust="spacingAndGlyphs">$0</text>
<text x="1075.53" y="768.00" font-size="19" fill="#4a4048" text-anchor="middle" textLength="68.95" lengthAdjust="spacingAndGlyphs">$50,000</text>
<text x="1212.56" y="768.00" font-size="19" fill="#4a4048" text-anchor="middle" textLength="78.80" lengthAdjust="spacingAndGlyphs">$100,000</text>
<text x="1349.59" y="768.00" font-size="19" fill="#4a4048" text-anchor="middle" textLength="78.80" lengthAdjust="spacingAndGlyphs">$150,000</text>
<text x="1486.61" y="768.00" font-size="19" fill="#4a4048" text-anchor="middle" textLength="78.80" lengthAdjust="spacingAndGlyphs">$200,000</text>
<text x="1623.64" y="768.00" font-size="19" fill="#4a4048" text-anchor="middle" textLength="78.80" lengthAdjust="spacingAndGlyphs">$250,000</text>
<text x="1760.67" y="768.00" font-size="19" fill="#4a4048" text-anchor="middle" textLength="78.80" lengthAdjust="spacingAndGlyphs">$300,000</text>
<text x="1897.70" y="768.00" font-size="19" fill="#4a4048" text-anchor="middle" textLength="78.80" lengthAdjust="spacingAndGlyphs">$350,000</text>
<rect x="785" y="856" width="1245.6" height="424.7" fill="#e0e8e0" stroke="#3d8a5a" stroke-width="1.6"/>
<text x="1407.80" y="899.00" font-size="24" fill="#3a4450" font-weight="bold" text-anchor="middle" textLength="191.50" lengthAdjust="spacingAndGlyphs">Leads by Source</text>
<path d="M1407.80 943.30 A150.3 150.3 0 0 1 1554.33 1127.04 L1481.89 1110.51 A76 76 0 0 0 1407.80 1017.60 Z" fill="#4a84dc" stroke="#e6ede6" stroke-width="3" stroke-linejoin="round"/>
<path d="M1554.33 1127.04 A150.3 150.3 0 0 1 1441.24 1240.13 L1424.71 1167.69 A76 76 0 0 0 1481.89 1110.51 Z" fill="#4eacc0" stroke="#e6ede6" stroke-width="3" stroke-linejoin="round"/>
<path d="M1441.24 1240.13 A150.3 150.3 0 0 1 1290.29 1187.31 L1348.38 1140.99 A76 76 0 0 0 1424.71 1167.69 Z" fill="#d4a040" stroke="#e6ede6" stroke-width="3" stroke-linejoin="round"/>
<path d="M1290.29 1187.31 A150.3 150.3 0 0 1 1272.38 1028.39 L1339.33 1060.62 A76 76 0 0 0 1348.38 1140.99 Z" fill="#52b080" stroke="#e6ede6" stroke-width="3" stroke-linejoin="round"/>
<path d="M1272.38 1028.39 A150.3 150.3 0 0 1 1407.80 943.30 L1407.80 1017.60 A76 76 0 0 0 1339.33 1060.62 Z" fill="#7b68d8" stroke="#e6ede6" stroke-width="3" stroke-linejoin="round"/>
<text x="1270.00" y="944.20" font-size="20" fill="#4a5058" text-anchor="middle" textLength="88.10" lengthAdjust="spacingAndGlyphs">Outbound</text>
<text x="1270.00" y="968.80" font-size="20" fill="#4a5058" text-anchor="middle" textLength="50.70" lengthAdjust="spacingAndGlyphs">17.9%</text>
<text x="1573.70" y="985.60" font-size="20" fill="#4a5058" text-anchor="middle" textLength="72.00" lengthAdjust="spacingAndGlyphs">Inbound</text>
<text x="1573.70" y="1010.20" font-size="20" fill="#4a5058" text-anchor="middle" textLength="50.70" lengthAdjust="spacingAndGlyphs">28.6%</text>
<text x="1209.30" y="1106.70" font-size="20" fill="#4a5058" text-anchor="middle" textLength="69.50" lengthAdjust="spacingAndGlyphs">Referral</text>
<text x="1209.30" y="1131.30" font-size="20" fill="#4a5058" text-anchor="middle" textLength="50.70" lengthAdjust="spacingAndGlyphs">17.9%</text>
<text x="1562.40" y="1209.10" font-size="20" fill="#4a5058" text-anchor="middle" textLength="70.50" lengthAdjust="spacingAndGlyphs">Website</text>
<text x="1562.40" y="1233.70" font-size="20" fill="#4a5058" text-anchor="middle" textLength="50.70" lengthAdjust="spacingAndGlyphs">17.9%</text>
<text x="1319.00" y="1253.90" font-size="20" fill="#4a5058" text-anchor="middle" textLength="50.00" lengthAdjust="spacingAndGlyphs">Event</text>
<text x="1319.00" y="1278.50" font-size="20" fill="#4a5058" text-anchor="middle" textLength="50.70" lengthAdjust="spacingAndGlyphs">17.9%</text>
<text x="1407.80" y="1088.50" font-size="27" fill="#3a4450" font-weight="bold" text-anchor="middle" textLength="30.50" lengthAdjust="spacingAndGlyphs">28</text>
<text x="1407.80" y="1118.60" font-size="25" fill="#3a4450" text-anchor="middle" textLength="51.70" lengthAdjust="spacingAndGlyphs">Total</text>
<rect x="2064.00" y="141.80" width="1.50" height="1510.20" fill="#d5d2cc"/>
<rect x="2065.50" y="141.80" width="946.50" height="78.50" fill="#f6efe3"/>
<path d="M2129.7 180.8 H2106.5 M2116.3 170.8 L2106 180.8 L2116.3 190.8" stroke="#3a4250" stroke-width="1.8" fill="none" stroke-linecap="round" stroke-linejoin="round"/>
<text x="2469.20" y="190.30" font-size="27" fill="#0d1017" font-weight="bold" textLength="151.20" lengthAdjust="spacingAndGlyphs">Automations</text>
<path d="M2962.5 171.5 L2982 191 M2982 171.5 L2962.5 191" stroke="#3a4250" stroke-width="1.8" fill="none" stroke-linecap="round" stroke-linejoin="round"/>
<rect x="2065.50" y="219.80" width="946.50" height="2.00" fill="#e2ded6"/>
<rect x="2065.50" y="221.80" width="946.50" height="88.20" fill="#ede5d5"/>
<path transform="translate(2097.6,249.6) scale(1.35)" d="M14.25.18l.9.2.73.26.59.3.45.32.34.34.25.34.16.33.1.3.04.26.02.2-.01.13V8.5l-.05.63-.13.55-.21.46-.26.38-.3.31-.33.25-.35.19-.35.14-.33.1-.3.07-.26.04-.21.02H8.77l-.69.05-.59.14-.5.22-.41.27-.33.32-.27.35-.2.36-.15.37-.1.35-.07.32-.04.27-.02.21v3.06H3.17l-.21-.03-.28-.07-.32-.12-.35-.18-.36-.26-.36-.36-.35-.46-.32-.59-.28-.73-.21-.88-.14-1.05-.05-1.23.06-1.22.16-1.04.24-.87.32-.71.36-.57.4-.44.42-.33.42-.24.4-.16.36-.1.32-.05.24-.01h.16l.06.01h8.16v-.83H6.18l-.01-2.75-.02-.37.05-.34.11-.31.17-.28.25-.26.31-.23.38-.2.44-.18.51-.15.58-.12.64-.1.71-.06.77-.04.84-.02 1.27.05zm-6.3 1.98l-.23.33-.08.41.08.41.23.34.33.22.41.09.41-.09.33-.22.23-.34.08-.41-.08-.41-.23-.33-.33-.22-.41-.09-.41.09zm13.09 3.95l.28.06.32.12.35.18.36.27.36.35.35.47.32.59.28.73.21.88.14 1.04.05 1.23-.06 1.23-.16 1.04-.24.86-.32.71-.36.57-.4.45-.42.33-.42.24-.4.16-.36.09-.32.05-.24.02-.16-.01h-8.22v.82h5.84l.01 2.76.02.36-.05.34-.11.31-.17.29-.25.25-.31.24-.38.2-.44.17-.51.15-.58.13-.64.09-.71.07-.77.04-.84.01-1.27-.04-1.07-.14-.9-.2-.73-.25-.59-.3-.45-.33-.34-.34-.25-.34-.16-.33-.1-.3-.04-.25-.02-.2.01-.13v-5.34l.05-.64.13-.54.21-.46.26-.38.3-.32.33-.24.35-.2.35-.14.33-.1.3-.06.26-.04.21-.02.13-.01h5.84l.69-.05.59-.14.5-.21.41-.28.33-.32.27-.35.2-.36.15-.36.1-.35.07-.32.04-.28.02-.21V6.07h2.09l.14.01zm-6.47 14.25l-.23.33-.08.41.08.41.23.33.33.23.41.08.41-.08.33-.23.23-.33.08-.41-.08-.41-.23-.33-.33-.23-.41-.08-.41.08z" fill="#1a1f2a"/>
<text x="2146.80" y="274.30" font-size="23" fill="#0d1017" font-weight="bold" textLength="250.20" lengthAdjust="spacingAndGlyphs">pipeline_by_stage.py</text>
<rect x="2945.5" y="242.5" width="46" height="46" fill="none" stroke="#e3ded2" stroke-width="1.5"/>
<path d="M2960.5 255.3 L2980.8 266.5 L2960.5 277.6 Z" fill="#000"/>
<rect x="2065.50" y="310.00" width="946.50" height="1.60" fill="#e2ded6"/>
<rect x="2065.50" y="311.60" width="946.50" height="84.40" fill="#ede5d5"/>
<text x="2098.80" y="361.60" font-size="23" fill="#1c2029" textLength="558.30" lengthAdjust="spacingAndGlyphs">Calculate lead count and value for each pipeline sta...</text>
<rect x="2691.30" y="330.50" width="87.50" height="46.90" fill="#2e6e5c"/>
<rect x="2732.80" y="333.60" width="40.60" height="40.70" fill="#f8f6f2"/>
<rect x="2796.60" y="330.50" width="193.40" height="47.50" fill="#f8f6f2"/>
<rect x="2805.5" y="338.5" width="30" height="29.5" fill="#7c3aed" stroke="#e8e4f0" stroke-width="1.5"/>
<text x="2845.70" y="362.50" font-size="23" fill="#1c2029" textLength="103.40" lengthAdjust="spacingAndGlyphs">#7C3AED</text>
<path d="M2963 351.5 L2970 358.5 L2977 351.5" stroke="#1c2029" stroke-width="1.8" fill="none" stroke-linecap="round" stroke-linejoin="round"/>
<rect x="2065.50" y="395.80" width="946.50" height="2.40" fill="#c9c5bd"/>
<rect x="2065.50" y="398.20" width="946.50" height="1172.30" fill="#f6efe3"/>
<g font-family="Liberation Mono" font-size="25" letter-spacing="-0.6" style="white-space:pre">
<text x="2108.7" y="442.20" text-anchor="end" fill="#1a1f6b" stroke="#1a1f6b" stroke-width="0.35">1</text>
<text x="2131.20" y="442.20" fill="#9b3aa0" stroke="#9b3aa0" stroke-width="0.35" xml:space="preserve">from</text>
<text x="2203.20" y="442.20" fill="#3d7fb8" stroke="#3d7fb8" stroke-width="0.35" xml:space="preserve">sheetos</text>
<text x="2318.40" y="442.20" fill="#9b3aa0" stroke="#9b3aa0" stroke-width="0.35" xml:space="preserve">import</text>
<text x="2419.20" y="442.20" fill="#3d7fb8" stroke="#3d7fb8" stroke-width="0.35" xml:space="preserve">Sheet</text>
<text x="2491.20" y="442.20" fill="#2a2a2a" stroke="#2a2a2a" stroke-width="0.35" xml:space="preserve">, </text>
<text x="2520.00" y="442.20" fill="#3d7fb8" stroke="#3d7fb8" stroke-width="0.35" xml:space="preserve">Table</text>
<text x="2592.00" y="442.20" fill="#2a2a2a" stroke="#2a2a2a" stroke-width="0.35" xml:space="preserve">, </text>
<text x="2620.80" y="442.20" fill="#3d7fb8" stroke="#3d7fb8" stroke-width="0.35" xml:space="preserve">automation</text>
<text x="2108.7" y="482.20" text-anchor="end" fill="#3a7090" stroke="#3a7090" stroke-width="0.35">2</text>
<text x="2108.7" y="522.20" text-anchor="end" fill="#3a7090" stroke="#3a7090" stroke-width="0.35">3</text>
<text x="2131.20" y="522.20" fill="#7a1a12" stroke="#7a1a12" stroke-width="0.35" xml:space="preserve">@automation</text>
<text x="2289.60" y="522.20" fill="#1a3cf5" stroke="#1a3cf5" stroke-width="0.35" xml:space="preserve">(</text>
<text x="2304.00" y="522.20" fill="#3d7fb8" stroke="#3d7fb8" stroke-width="0.35" xml:space="preserve">description</text>
<text x="2462.40" y="522.20" fill="#2a2a2a" stroke="#2a2a2a" stroke-width="0.35" xml:space="preserve">=</text>
<text x="2476.80" y="522.20" fill="#5a9a50" stroke="#5a9a50" stroke-width="0.35" xml:space="preserve">"Calculate lead count and value</text>
<text x="2131.20" y="562.20" fill="#5a9a50" stroke="#5a9a50" stroke-width="0.35" xml:space="preserve">for each pipeline stage"</text>
<text x="2476.80" y="562.20" fill="#1a3cf5" stroke="#1a3cf5" stroke-width="0.35" xml:space="preserve">)</text>
<text x="2108.7" y="602.20" text-anchor="end" fill="#3a7090" stroke="#3a7090" stroke-width="0.35">4</text>
<text x="2131.20" y="602.20" fill="#9b3aa0" stroke="#9b3aa0" stroke-width="0.35" xml:space="preserve">def</text>
<text x="2188.80" y="602.20" fill="#3d7fb8" stroke="#3d7fb8" stroke-width="0.35" xml:space="preserve">main</text>
<text x="2246.40" y="602.20" fill="#1a3cf5" stroke="#1a3cf5" stroke-width="0.35" xml:space="preserve">()</text>
<text x="2275.20" y="602.20" fill="#2a2a2a" stroke="#2a2a2a" stroke-width="0.35" xml:space="preserve">:</text>
<text x="2108.7" y="642.20" text-anchor="end" fill="#3a7090" stroke="#3a7090" stroke-width="0.35">5</text>
<text x="2188.80" y="642.20" fill="#3d7fb8" stroke="#3d7fb8" stroke-width="0.35" xml:space="preserve">leads</text>
<text x="2260.80" y="642.20" fill="#2a2a2a" stroke="#2a2a2a" stroke-width="0.35" xml:space="preserve"> = </text>
<text x="2304.00" y="642.20" fill="#3d7fb8" stroke="#3d7fb8" stroke-width="0.35" xml:space="preserve">Table</text>
<text x="2376.00" y="642.20" fill="#1a3cf5" stroke="#1a3cf5" stroke-width="0.35" xml:space="preserve">(</text>
<text x="2390.40" y="642.20" fill="#3d7fb8" stroke="#3d7fb8" stroke-width="0.35" xml:space="preserve">name</text>
<text x="2448.00" y="642.20" fill="#2a2a2a" stroke="#2a2a2a" stroke-width="0.35" xml:space="preserve">=</text>
<text x="2462.40" y="642.20" fill="#5a9a50" stroke="#5a9a50" stroke-width="0.35" xml:space="preserve">"leads"</text>
<text x="2563.20" y="642.20" fill="#1a3cf5" stroke="#1a3cf5" stroke-width="0.35" xml:space="preserve">)</text>
<text x="2108.7" y="682.20" text-anchor="end" fill="#3a7090" stroke="#3a7090" stroke-width="0.35">6</text>
<text x="2188.80" y="682.20" fill="#3d7fb8" stroke="#3d7fb8" stroke-width="0.35" xml:space="preserve">dashboard</text>
<text x="2318.40" y="682.20" fill="#2a2a2a" stroke="#2a2a2a" stroke-width="0.35" xml:space="preserve"> = </text>
<text x="2361.60" y="682.20" fill="#3d7fb8" stroke="#3d7fb8" stroke-width="0.35" xml:space="preserve">Sheet</text>
<text x="2433.60" y="682.20" fill="#1a3cf5" stroke="#1a3cf5" stroke-width="0.35" xml:space="preserve">(</text>
<text x="2448.00" y="682.20" fill="#3d7fb8" stroke="#3d7fb8" stroke-width="0.35" xml:space="preserve">name</text>
<text x="2505.60" y="682.20" fill="#2a2a2a" stroke="#2a2a2a" stroke-width="0.35" xml:space="preserve">=</text>
<text x="2520.00" y="682.20" fill="#5a9a50" stroke="#5a9a50" stroke-width="0.35" xml:space="preserve">"Dashboard"</text>
<text x="2678.40" y="682.20" fill="#1a3cf5" stroke="#1a3cf5" stroke-width="0.35" xml:space="preserve">)</text>
<text x="2108.7" y="722.20" text-anchor="end" fill="#3a7090" stroke="#3a7090" stroke-width="0.35">7</text>
<text x="2108.7" y="762.20" text-anchor="end" fill="#3a7090" stroke="#3a7090" stroke-width="0.35">8</text>
<text x="2188.80" y="762.20" fill="#3d7fb8" stroke="#3d7fb8" stroke-width="0.35" xml:space="preserve">stages</text>
<text x="2275.20" y="762.20" fill="#2a2a2a" stroke="#2a2a2a" stroke-width="0.35" xml:space="preserve"> = </text>
<text x="2318.40" y="762.20" fill="#1a3cf5" stroke="#1a3cf5" stroke-width="0.35" xml:space="preserve">[</text>
<text x="2332.80" y="762.20" fill="#5a9a50" stroke="#5a9a50" stroke-width="0.35" xml:space="preserve">'New'</text>
<text x="2404.80" y="762.20" fill="#2a2a2a" stroke="#2a2a2a" stroke-width="0.35" xml:space="preserve">, </text>
<text x="2433.60" y="762.20" fill="#5a9a50" stroke="#5a9a50" stroke-width="0.35" xml:space="preserve">'Contacted'</text>
<text x="2592.00" y="762.20" fill="#2a2a2a" stroke="#2a2a2a" stroke-width="0.35" xml:space="preserve">, </text>
<text x="2620.80" y="762.20" fill="#5a9a50" stroke="#5a9a50" stroke-width="0.35" xml:space="preserve">'Qualified'</text>
<text x="2779.20" y="762.20" fill="#2a2a2a" stroke="#2a2a2a" stroke-width="0.35" xml:space="preserve">, </text>
<text x="2808.00" y="762.20" fill="#5a9a50" stroke="#5a9a50" stroke-width="0.35" xml:space="preserve">'Proposal'</text>
<text x="2952.00" y="762.20" fill="#2a2a2a" stroke="#2a2a2a" stroke-width="0.35" xml:space="preserve">,</text>
<text x="2188.80" y="802.20" fill="#5a9a50" stroke="#5a9a50" stroke-width="0.35" xml:space="preserve">'Negotiation'</text>
<text x="2376.00" y="802.20" fill="#2a2a2a" stroke="#2a2a2a" stroke-width="0.35" xml:space="preserve">, </text>
<text x="2404.80" y="802.20" fill="#5a9a50" stroke="#5a9a50" stroke-width="0.35" xml:space="preserve">'Closed Won'</text>
<text x="2577.60" y="802.20" fill="#2a2a2a" stroke="#2a2a2a" stroke-width="0.35" xml:space="preserve">, </text>
<text x="2606.40" y="802.20" fill="#5a9a50" stroke="#5a9a50" stroke-width="0.35" xml:space="preserve">'Closed Lost'</text>
<text x="2793.60" y="802.20" fill="#1a3cf5" stroke="#1a3cf5" stroke-width="0.35" xml:space="preserve">]</text>
<text x="2108.7" y="842.20" text-anchor="end" fill="#3a7090" stroke="#3a7090" stroke-width="0.35">9</text>
<text x="2188.80" y="842.20" fill="#3d7fb8" stroke="#3d7fb8" stroke-width="0.35" xml:space="preserve">rows_map</text>
<text x="2304.00" y="842.20" fill="#2a2a2a" stroke="#2a2a2a" stroke-width="0.35" xml:space="preserve"> = </text>
<text x="2347.20" y="842.20" fill="#1a3cf5" stroke="#1a3cf5" stroke-width="0.35" xml:space="preserve">{</text>
<text x="2108.7" y="882.20" text-anchor="end" fill="#3a7090" stroke="#3a7090" stroke-width="0.35">10</text>
<text x="2246.40" y="882.20" fill="#5a9a50" stroke="#5a9a50" stroke-width="0.35" xml:space="preserve">'New'</text>
<text x="2318.40" y="882.20" fill="#2a2a2a" stroke="#2a2a2a" stroke-width="0.35" xml:space="preserve">: </text>
<text x="2347.20" y="882.20" fill="#5a9a50" stroke="#5a9a50" stroke-width="0.35" xml:space="preserve">'12'</text>
<text x="2404.80" y="882.20" fill="#2a2a2a" stroke="#2a2a2a" stroke-width="0.35" xml:space="preserve">,</text>
<text x="2108.7" y="922.20" text-anchor="end" fill="#3a7090" stroke="#3a7090" stroke-width="0.35">11</text>
<text x="2246.40" y="922.20" fill="#5a9a50" stroke="#5a9a50" stroke-width="0.35" xml:space="preserve">'Contacted'</text>
<text x="2404.80" y="922.20" fill="#2a2a2a" stroke="#2a2a2a" stroke-width="0.35" xml:space="preserve">: </text>
<text x="2433.60" y="922.20" fill="#5a9a50" stroke="#5a9a50" stroke-width="0.35" xml:space="preserve">'13'</text>
<text x="2491.20" y="922.20" fill="#2a2a2a" stroke="#2a2a2a" stroke-width="0.35" xml:space="preserve">,</text>
<text x="2108.7" y="962.20" text-anchor="end" fill="#3a7090" stroke="#3a7090" stroke-width="0.35">12</text>
<text x="2246.40" y="962.20" fill="#5a9a50" stroke="#5a9a50" stroke-width="0.35" xml:space="preserve">'Qualified'</text>
<text x="2404.80" y="962.20" fill="#2a2a2a" stroke="#2a2a2a" stroke-width="0.35" xml:space="preserve">: </text>
<text x="2433.60" y="962.20" fill="#5a9a50" stroke="#5a9a50" stroke-width="0.35" xml:space="preserve">'14'</text>
<text x="2491.20" y="962.20" fill="#2a2a2a" stroke="#2a2a2a" stroke-width="0.35" xml:space="preserve">,</text>
<text x="2108.7" y="1002.20" text-anchor="end" fill="#3a7090" stroke="#3a7090" stroke-width="0.35">13</text>
<text x="2246.40" y="1002.20" fill="#5a9a50" stroke="#5a9a50" stroke-width="0.35" xml:space="preserve">'Proposal'</text>
<text x="2390.40" y="1002.20" fill="#2a2a2a" stroke="#2a2a2a" stroke-width="0.35" xml:space="preserve">: </text>
<text x="2419.20" y="1002.20" fill="#5a9a50" stroke="#5a9a50" stroke-width="0.35" xml:space="preserve">'15'</text>
<text x="2476.80" y="1002.20" fill="#2a2a2a" stroke="#2a2a2a" stroke-width="0.35" xml:space="preserve">,</text>
<text x="2108.7" y="1042.20" text-anchor="end" fill="#3a7090" stroke="#3a7090" stroke-width="0.35">14</text>
<text x="2246.40" y="1042.20" fill="#5a9a50" stroke="#5a9a50" stroke-width="0.35" xml:space="preserve">'Negotiation'</text>
<text x="2433.60" y="1042.20" fill="#2a2a2a" stroke="#2a2a2a" stroke-width="0.35" xml:space="preserve">: </text>
<text x="2462.40" y="1042.20" fill="#5a9a50" stroke="#5a9a50" stroke-width="0.35" xml:space="preserve">'16'</text>
<text x="2520.00" y="1042.20" fill="#2a2a2a" stroke="#2a2a2a" stroke-width="0.35" xml:space="preserve">,</text>
<text x="2108.7" y="1082.20" text-anchor="end" fill="#3a7090" stroke="#3a7090" stroke-width="0.35">15</text>
<text x="2246.40" y="1082.20" fill="#5a9a50" stroke="#5a9a50" stroke-width="0.35" xml:space="preserve">'Closed Won'</text>
<text x="2419.20" y="1082.20" fill="#2a2a2a" stroke="#2a2a2a" stroke-width="0.35" xml:space="preserve">: </text>
<text x="2448.00" y="1082.20" fill="#5a9a50" stroke="#5a9a50" stroke-width="0.35" xml:space="preserve">'17'</text>
<text x="2505.60" y="1082.20" fill="#2a2a2a" stroke="#2a2a2a" stroke-width="0.35" xml:space="preserve">,</text>
<text x="2108.7" y="1122.20" text-anchor="end" fill="#3a7090" stroke="#3a7090" stroke-width="0.35">16</text>
<text x="2246.40" y="1122.20" fill="#5a9a50" stroke="#5a9a50" stroke-width="0.35" xml:space="preserve">'Closed Lost'</text>
<text x="2433.60" y="1122.20" fill="#2a2a2a" stroke="#2a2a2a" stroke-width="0.35" xml:space="preserve">: </text>
<text x="2462.40" y="1122.20" fill="#5a9a50" stroke="#5a9a50" stroke-width="0.35" xml:space="preserve">'18'</text>
<text x="2520.00" y="1122.20" fill="#2a2a2a" stroke="#2a2a2a" stroke-width="0.35" xml:space="preserve">,</text>
<text x="2108.7" y="1162.20" text-anchor="end" fill="#3a7090" stroke="#3a7090" stroke-width="0.35">17</text>
<text x="2188.80" y="1162.20" fill="#1a3cf5" stroke="#1a3cf5" stroke-width="0.35" xml:space="preserve">}</text>
<text x="2108.7" y="1202.20" text-anchor="end" fill="#3a7090" stroke="#3a7090" stroke-width="0.35">18</text>
<text x="2108.7" y="1242.20" text-anchor="end" fill="#3a7090" stroke="#3a7090" stroke-width="0.35">19</text>
<text x="2188.80" y="1242.20" fill="#9b3aa0" stroke="#9b3aa0" stroke-width="0.35" xml:space="preserve">for</text>
<text x="2246.40" y="1242.20" fill="#3d7fb8" stroke="#3d7fb8" stroke-width="0.35" xml:space="preserve">stage</text>
<text x="2332.80" y="1242.20" fill="#9b3aa0" stroke="#9b3aa0" stroke-width="0.35" xml:space="preserve">in</text>
<text x="2376.00" y="1242.20" fill="#3d7fb8" stroke="#3d7fb8" stroke-width="0.35" xml:space="preserve">stages</text>
<text x="2462.40" y="1242.20" fill="#2a2a2a" stroke="#2a2a2a" stroke-width="0.35" xml:space="preserve">:</text>
<text x="2108.7" y="1282.20" text-anchor="end" fill="#3a7090" stroke="#3a7090" stroke-width="0.35">20</text>
<text x="2246.40" y="1282.20" fill="#3d7fb8" stroke="#3d7fb8" stroke-width="0.35" xml:space="preserve">result</text>
<text x="2332.80" y="1282.20" fill="#2a2a2a" stroke="#2a2a2a" stroke-width="0.35" xml:space="preserve"> = </text>
<text x="2376.00" y="1282.20" fill="#3d7fb8" stroke="#3d7fb8" stroke-width="0.35" xml:space="preserve">leads</text>
<text x="2448.00" y="1282.20" fill="#2a2a2a" stroke="#2a2a2a" stroke-width="0.35" xml:space="preserve">.</text>
<text x="2462.40" y="1282.20" fill="#3d7fb8" stroke="#3d7fb8" stroke-width="0.35" xml:space="preserve">query</text>
<text x="2534.40" y="1282.20" fill="#e05a4a" stroke="#e05a4a" stroke-width="0.35" xml:space="preserve">(</text>
<text x="2548.80" y="1282.20" fill="#5a9a50" stroke="#5a9a50" stroke-width="0.35" xml:space="preserve">f"""</text>
<text x="2108.7" y="1322.20" text-anchor="end" fill="#3a7090" stroke="#3a7090" stroke-width="0.35">21</text>
<text x="2304.00" y="1322.20" fill="#5a9a50" stroke="#5a9a50" stroke-width="0.35" xml:space="preserve">SELECT COUNT(*) as count, COALESCE(SUM</text>
<text x="2304.00" y="1362.20" fill="#5a9a50" stroke="#5a9a50" stroke-width="0.35" xml:space="preserve">(deal_value), 0) as total</text>
<text x="2108.7" y="1402.20" text-anchor="end" fill="#3a7090" stroke="#3a7090" stroke-width="0.35">22</text>
<text x="2304.00" y="1402.20" fill="#3d7fb8" stroke="#3d7fb8" stroke-width="0.35" xml:space="preserve">FROM leads</text>
<text x="2108.7" y="1442.20" text-anchor="end" fill="#3a7090" stroke="#3a7090" stroke-width="0.35">23</text>
<text x="2304.00" y="1442.20" fill="#3d7fb8" stroke="#3d7fb8" stroke-width="0.35" xml:space="preserve">WHERE stage</text>
<text x="2462.40" y="1442.20" fill="#2a2a2a" stroke="#2a2a2a" stroke-width="0.35" xml:space="preserve"> = </text>
<text x="2505.60" y="1442.20" fill="#5a9a50" stroke="#5a9a50" stroke-width="0.35" xml:space="preserve">'{stage}'</text>
<text x="2108.7" y="1482.20" text-anchor="end" fill="#3a7090" stroke="#3a7090" stroke-width="0.35">24</text>
<text x="2246.40" y="1482.20" fill="#5a9a50" stroke="#5a9a50" stroke-width="0.35" xml:space="preserve">""")</text>
<text x="2108.7" y="1522.20" text-anchor="end" fill="#3a7090" stroke="#3a7090" stroke-width="0.35">25</text>
<text x="2246.40" y="1522.20" fill="#5a9a50" stroke="#5a9a50" stroke-width="0.35" xml:space="preserve">count = int(result[0]["count"]) if result else 0</text>
<text x="2108.7" y="1562.20" text-anchor="end" fill="#3a7090" stroke="#3a7090" stroke-width="0.35">26</text>
<text x="2246.40" y="1562.20" fill="#5a9a50" stroke="#5a9a50" stroke-width="0.35" xml:space="preserve">total = float(result[0]["total"]) if result else 0</text>
</g>
<rect x="2130.20" y="614.20" width="1.50" height="956.30" fill="#cdcbc6"/>
<rect x="2188.00" y="854.20" width="1.50" height="280.00" fill="#cdcbc6"/>
<rect x="2188.00" y="1254.20" width="1.50" height="316.30" fill="#cdcbc6"/>
<rect x="2245.80" y="1294.20" width="1.50" height="160.00" fill="#cdcbc6"/>
<rect x="2065.50" y="1570.50" width="946.50" height="2.00" fill="#e2ded6"/>
<rect x="2065.50" y="1572.50" width="946.50" height="79.50" fill="#ede5d5"/>
<text x="2098.30" y="1624.00" font-size="21.7" fill="#3a3f4a" textLength="105.70" lengthAdjust="spacingAndGlyphs">No runs yet</text>
<rect x="0.00" y="1652.00" width="3012.00" height="62.00" fill="#ebe4d4"/>
<rect x="0.00" y="1651.50" width="3012.00" height="1.60" fill="#c8c4bc"/>
<rect x="17.2" y="1654.6" width="257.3" height="51.4" fill="#f8f6f1" stroke="#d0ccc5" stroke-width="1.5"/>
<g stroke="#2e6e5c" stroke-width="1.9" fill="none"><rect x="45" y="1670" width="19" height="19"/><path d="M51.33 1670 V1689 M57.67 1670 V1689 M45 1676.33 H64 M45 1682.67 H64"/></g>
<text x="79.00" y="1686.60" font-size="23.5" fill="#0d1017" font-weight="bold" textLength="115.60" lengthAdjust="spacingAndGlyphs">Dashboard</text>
<path d="M212.9 1684 L223.4 1673.3 L227.8 1677.6 L217.8 1687.5 L213.2 1687.7 Z M221.1 1675.6 L225.4 1679.9" stroke="#2e3442" stroke-width="1.5" fill="none" stroke-linecap="round" stroke-linejoin="round"/>
<circle cx="255.9" cy="1674.6" r="1.2" fill="#2e3442"/>
<circle cx="255.9" cy="1681" r="1.2" fill="#2e3442"/>
<circle cx="255.9" cy="1687.3" r="1.2" fill="#2e3442"/>
<rect x="275.00" y="1654.00" width="204.00" height="55.50" fill="#f6efe3"/>
<g stroke="#353d4d" stroke-width="2" fill="none"><rect x="305" y="1672" width="18" height="18" rx="0.6"/><path d="M305 1678 H323 M311 1678 V1690"/></g>
<text x="339.00" y="1689.00" font-size="23.5" fill="#353d4d" textLength="57.40" lengthAdjust="spacingAndGlyphs">leads</text>
<path d="M515 1670 V1687 M506.5 1678.5 H523.5" stroke="#353d4d" stroke-width="1.7" fill="none" stroke-linecap="round" stroke-linejoin="round"/>
<rect x="2202.00" y="1654.00" width="381.80" height="60.00" fill="#2e6e5c"/>
<path d="M2241.5 1672.8 L2241 1682 L2250.3 1681.8 L2237.8 1696.8 L2238.6 1687.2 L2230.2 1687.2 Z" stroke="#ffffff" stroke-width="2.1" fill="none" stroke-linecap="round" stroke-linejoin="round"/>
<text x="2262.00" y="1692.00" font-size="24" fill="#ffffff" textLength="297.20" lengthAdjust="spacingAndGlyphs">6 computational automations</text>
<path d="M2626.1 1672.8 L2625.6 1682 L2634.8 1681.8 L2622.3 1696.8 L2623.1 1687.2 L2614.8 1687.2 Z" stroke="#353d4d" stroke-width="2.1" fill="none" stroke-linecap="round" stroke-linejoin="round"/>
<text x="2646.70" y="1692.00" font-size="24" fill="#353d4d" textLength="189.00" lengthAdjust="spacingAndGlyphs">agent automations</text>
<circle cx="2899" cy="1682.3" r="10.3" fill="none" stroke="#0d1017" stroke-width="2"/>
<path d="M2906.5 1689.8 L2912.8 1696.6" stroke="#0d1017" stroke-width="2" fill="none" stroke-linecap="round" stroke-linejoin="round"/>
<text x="2925.00" y="1692.00" font-size="22.5" fill="#0d1017" textLength="41.70" lengthAdjust="spacingAndGlyphs">75%</text>
<path d="M2974 1680 L2985 1690 L2996 1680" stroke="#8a8a8a" stroke-width="1.8" fill="none" stroke-linecap="round" stroke-linejoin="round"/>
</svg></body></html>
